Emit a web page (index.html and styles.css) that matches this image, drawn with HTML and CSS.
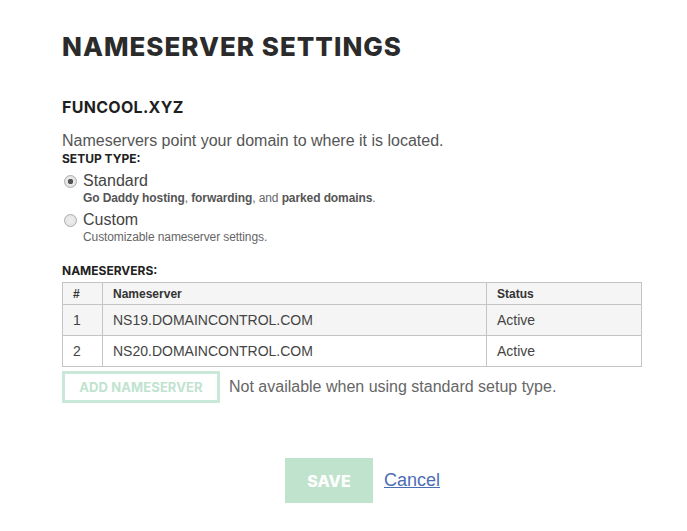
FILE: index.html
```html
<!DOCTYPE html>
<html lang="en">
<head>
<meta charset="utf-8">
<title>Nameserver Settings</title>
<link rel="stylesheet" href="styles.css">
</head>
<body>
<div class="page">
  <h1 class="title">NAMESERVER SETTINGS</h1>
  <h2 class="domain">FUNCOOL.XYZ</h2>
  <p class="intro">Nameservers point your domain to where it is located.</p>
  <div class="label label-setup">SETUP TYPE:</div>
  <div class="options">
    <div class="option">
      <span class="radio checked"></span>
      <div class="option-text">
        <div class="option-name">Standard</div>
        <div class="option-desc"><b>Go Daddy hosting</b>, <b>forwarding</b>, and <b>parked domains</b>.</div>
      </div>
    </div>
    <div class="option">
      <span class="radio"></span>
      <div class="option-text">
        <div class="option-name">Custom</div>
        <div class="option-desc">Customizable nameserver settings.</div>
      </div>
    </div>
  </div>
  <div class="label label-ns">NAMESERVERS:</div>
  <table class="ns-table">
    <thead>
      <tr><th class="col-num">#</th><th class="col-ns">Nameserver</th><th class="col-status">Status</th></tr>
    </thead>
    <tbody>
      <tr class="striped"><td>1</td><td>NS19.DOMAINCONTROL.COM</td><td>Active</td></tr>
      <tr><td>2</td><td>NS20.DOMAINCONTROL.COM</td><td>Active</td></tr>
    </tbody>
  </table>
  <div class="add-row">
    <button class="btn-add" type="button">ADD NAMESERVER</button>
    <span class="add-note">Not available when using standard setup type.</span>
  </div>
  <div class="footer">
    <button class="btn-save" type="button">SAVE</button>
    <a class="cancel" href="#">Cancel</a>
  </div>
</div>
</body>
</html>
```

FILE: styles.css
```css
html, body {
  margin: 0;
  padding: 0;
  background: #ffffff;
}

body {
  font-family: "Liberation Sans", Arial, sans-serif;
  color: #444;
}

.page {
  width: 580px;
  padding: 31px 0 0 62px;
}

.title {
  margin: 0;
  font-family: "Inter", "Liberation Sans", sans-serif;
  font-weight: 800;
  font-size: 26px;
  line-height: 32px;
  color: #2b2b2b;
  letter-spacing: 1px;
}

.domain {
  margin: 34px 0 0;
  font-family: "Inter", "Liberation Sans", sans-serif;
  font-weight: 700;
  font-size: 16px;
  line-height: 20px;
  color: #1f1f1f;
  letter-spacing: 0.3px;
}

.intro {
  margin: 14px 0 0;
  font-size: 16px;
  line-height: 20px;
  color: #555;
}

.label {
  font-family: "Inter", "Liberation Sans", sans-serif;
  font-weight: 700;
  font-size: 12px;
  line-height: 14px;
  color: #222;
}

.label-setup {
  margin-top: 1px;
}

.options {
  margin-top: 5px;
  display: flex;
  flex-direction: column;
  gap: 4px;
}

.option {
  display: flex;
  align-items: flex-start;
}

.radio {
  flex: none;
  box-sizing: border-box;
  width: 13px;
  height: 13px;
  margin: 4px 6px 0 2px;
  border-radius: 50%;
  border: 1px solid #acacac;
  background: radial-gradient(circle, #eeeeee 0%, #e0e0e0 100%);
}

.radio.checked {
  background: radial-gradient(circle, #555 0, #555 2.5px, #e8e8e8 3px, #e0e0e0 100%);
}

.option-name {
  font-size: 16px;
  line-height: 20px;
  color: #444;
}

.option-desc {
  font-size: 12px;
  line-height: 15px;
  color: #666;
  letter-spacing: -0.1px;
}

.option-desc b {
  color: #555;
}

.label-ns {
  margin-top: 19px;
}

.ns-table {
  margin-top: 4px;
  width: 580px;
  border-collapse: collapse;
  font-size: 14px;
  color: #444;
}

.ns-table th,
.ns-table td {
  border: 1px solid #c4c4c4;
  text-align: left;
  padding: 0 10px;
}

.ns-table th {
  height: 21px;
  font-size: 12px;
  font-weight: 700;
  color: #333;
  background: #f5f5f5;
}

.ns-table td {
  height: 30px;
}

.ns-table .striped td {
  background: #f5f5f5;
}

.col-num {
  width: 19px;
}

.col-status {
  width: 134px;
}

.add-row {
  margin-top: 4px;
  display: flex;
  align-items: center;
  gap: 9px;
}

.btn-add {
  box-sizing: border-box;
  width: 158px;
  height: 32px;
  padding: 0;
  border: 3px solid #c9e8d7;
  background: #fff;
  color: #bfe3cf;
  font-family: "Inter", "Liberation Sans", sans-serif;
  font-weight: 700;
  font-size: 13px;
  letter-spacing: 0.1px;
}

.add-note {
  font-size: 16px;
  color: #666;
}

.footer {
  margin-top: 55px;
  padding-left: 223px;
  display: flex;
  align-items: center;
  gap: 11px;
}

.btn-save {
  width: 88px;
  height: 45px;
  padding: 0;
  border: none;
  background: #bfe3cd;
  color: #fff;
  font-family: "Inter", "Liberation Sans", sans-serif;
  font-weight: 800;
  font-size: 16px;
}

.cancel {
  font-size: 18px;
  color: #4c6db3;
  text-decoration: underline;
}
```
